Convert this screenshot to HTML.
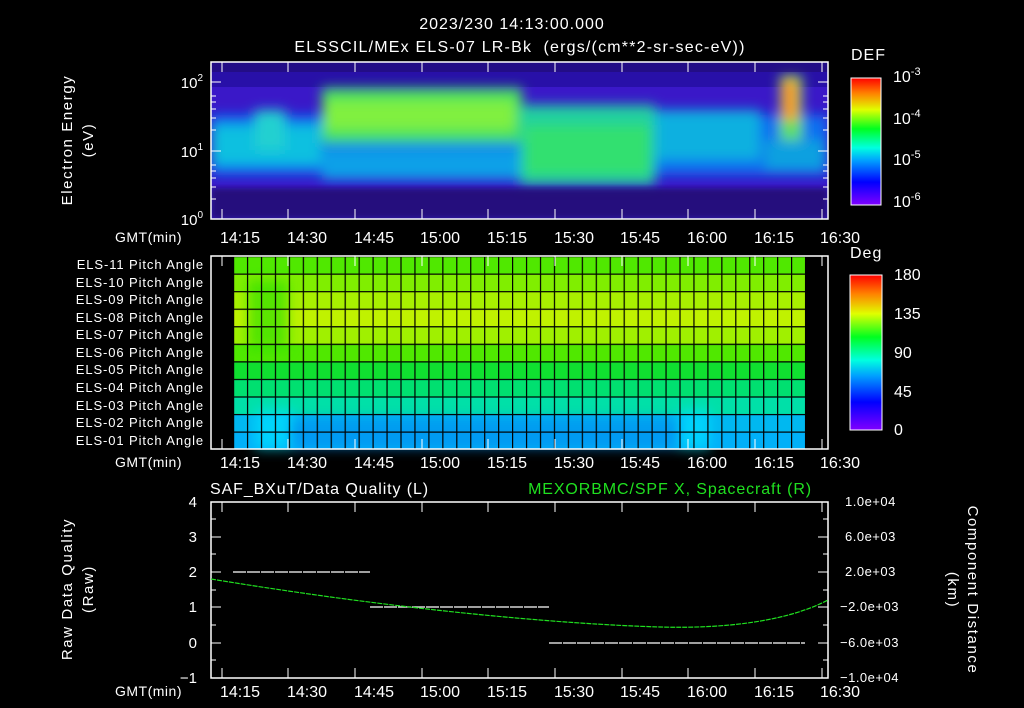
<!DOCTYPE html>
<html><head><meta charset="utf-8"><style>
html,body{margin:0;padding:0;background:#000;width:1024px;height:708px;overflow:hidden}
svg text{font-family:"Liberation Sans",sans-serif;fill:#fff}
</style></head><body>
<svg width="1024" height="708" viewBox="0 0 1024 708" xmlns="http://www.w3.org/2000/svg">
<defs>
<filter id="b6" x="-20%" y="-50%" width="140%" height="200%"><feGaussianBlur stdDeviation="6"/></filter>
<filter id="b3"><feGaussianBlur stdDeviation="3"/></filter>
<linearGradient id="cb" x1="0" y1="1" x2="0" y2="0">
<stop offset="0" stop-color="#8000ff"/><stop offset="0.18" stop-color="#0000ff"/><stop offset="0.35" stop-color="#00a0ff"/><stop offset="0.45" stop-color="#00ffe0"/><stop offset="0.6" stop-color="#00ff20"/><stop offset="0.75" stop-color="#e0ff00"/><stop offset="0.88" stop-color="#ff8000"/><stop offset="1" stop-color="#ff0000"/>
</linearGradient>
<pattern id="grid" x="233" y="256" width="13.95" height="17.55" patternUnits="userSpaceOnUse">
<rect x="0" y="0" width="13.95" height="1.2" fill="#000"/><rect x="0" y="0" width="1.2" height="17.55" fill="#000"/>
</pattern>
<clipPath id="c1"><rect x="211" y="62" width="617" height="157"/></clipPath>
</defs>

<text x="512" y="29" font-size="16" letter-spacing="1" text-anchor="middle">2023/230 14:13:00.000</text>
<text x="520" y="52" font-size="16" letter-spacing="1.2" text-anchor="middle" xml:space="preserve">ELSSCIL/MEx ELS-07 LR-Bk  (ergs/(cm**2-sr-sec-eV))</text>

<!-- Panel 1 spectrogram -->
<g clip-path="url(#c1)">
<rect x="211" y="62" width="617" height="157" fill="#3a18c8"/>
<rect x="211" y="62" width="617" height="25" fill="#2810a8"/>
<g filter="url(#b6)">
<rect x="211" y="115" width="617" height="60" fill="#1070f0"/>
<rect x="211" y="125" width="110" height="40" fill="#10c0e0"/>
<rect x="255" y="110" width="30" height="40" fill="#20d0d0"/>
<rect x="322" y="88" width="200" height="55" fill="#40e060"/>
<rect x="325" y="100" width="190" height="30" fill="#80f040"/>
<rect x="322" y="150" width="200" height="30" fill="#10a0e8"/>
<rect x="520" y="105" width="135" height="80" fill="#20d0a0"/>
<rect x="525" y="125" width="125" height="50" fill="#30e070"/>
<rect x="655" y="110" width="105" height="50" fill="#10b0e0"/>
<rect x="780" y="75" width="22" height="85" fill="#60e060"/>
<rect x="783" y="80" width="14" height="40" fill="#ff9020"/>
<rect x="765" y="140" width="60" height="30" fill="#10a0e0"/>
</g>
<rect x="211" y="188" width="617" height="31" fill="#200c70" opacity="0.85" filter="url(#b3)"/>
<rect x="211" y="62" width="617" height="10" fill="#200c70" opacity="0.6"/>
</g>
<rect x="211" y="62" width="617" height="157" fill="none" stroke="#fff" stroke-width="1.5"/>
<g stroke="#fff" stroke-width="1">
<path d="M211 82h10M211 151h10M211 219h10M828 82h-10M828 151h-10M211 130h5M211 118h5M211 109h5M211 102h5M211 96h5M211 199h5M211 187h5M211 178h5M211 171h5M211 165h5M828 130h-5M828 118h-5M828 109h-5M828 102h-5M828 96h-5M828 199h-5M828 187h-5M828 178h-5M828 171h-5M828 165h-5"/>
</g>
<text x="203" y="88" font-size="15" text-anchor="end">10<tspan font-size="10" dy="-7">2</tspan></text>
<text x="203" y="157" font-size="15" text-anchor="end">10<tspan font-size="10" dy="-7">1</tspan></text>
<text x="203" y="225" font-size="15" text-anchor="end">10<tspan font-size="10" dy="-7">0</tspan></text>
<text transform="translate(72,140) rotate(-90)" font-size="15" letter-spacing="1.6" text-anchor="middle">Electron Energy</text>
<text transform="translate(93,140) rotate(-90)" font-size="15" letter-spacing="1.6" text-anchor="middle">(eV)</text>
<text x="851" y="60" font-size="16" letter-spacing="1">DEF</text>
<rect x="851" y="78" width="30" height="127" fill="url(#cb)" stroke="#fff"/>
<text x="893" y="82" font-size="16">10<tspan font-size="11" dy="-7">-3</tspan></text>
<text x="893" y="124" font-size="16">10<tspan font-size="11" dy="-7">-4</tspan></text>
<text x="893" y="165" font-size="16">10<tspan font-size="11" dy="-7">-5</tspan></text>
<text x="893" y="207" font-size="16">10<tspan font-size="11" dy="-7">-6</tspan></text>

<!-- Panel 2 -->
<g>
<rect x="233" y="256" width="572" height="17.6" fill="#50e800"/>
<rect x="233" y="273.5" width="572" height="17.6" fill="#80ee00"/>
<rect x="233" y="291" width="572" height="17.6" fill="#a8f000"/>
<rect x="233" y="308.6" width="572" height="17.6" fill="#c0f200"/>
<rect x="233" y="326.2" width="572" height="17.6" fill="#a0f000"/>
<rect x="233" y="343.8" width="572" height="17.6" fill="#50e800"/>
<rect x="233" y="361.4" width="572" height="17.6" fill="#10e030"/>
<rect x="233" y="379" width="572" height="17.6" fill="#00e070"/>
<rect x="233" y="396.6" width="572" height="17.6" fill="#00e0a8"/>
<rect x="233" y="414.2" width="572" height="17.6" fill="#00b8f0"/>
<rect x="233" y="431.8" width="572" height="17.2" fill="#00b0f8"/>
<g filter="url(#b6)" opacity="0.7">
<rect x="248" y="280" width="40" height="70" fill="#30e000"/>
<rect x="255" y="410" width="40" height="39" fill="#00e0ff"/>
<rect x="290" y="418" width="390" height="30" fill="#0090f0"/>
<rect x="680" y="410" width="30" height="39" fill="#00e0ff"/>
</g>
<rect x="233" y="256" width="572" height="193" fill="url(#grid)"/>
</g>
<rect x="211" y="256" width="617" height="193" fill="none" stroke="#fff" stroke-width="1.5"/>
<g font-size="13" letter-spacing="0.9" text-anchor="end">
<text x="204" y="269">ELS-11 Pitch Angle</text>
<text x="204" y="287">ELS-10 Pitch Angle</text>
<text x="204" y="304">ELS-09 Pitch Angle</text>
<text x="204" y="322">ELS-08 Pitch Angle</text>
<text x="204" y="339">ELS-07 Pitch Angle</text>
<text x="204" y="357">ELS-06 Pitch Angle</text>
<text x="204" y="374">ELS-05 Pitch Angle</text>
<text x="204" y="392">ELS-04 Pitch Angle</text>
<text x="204" y="410">ELS-03 Pitch Angle</text>
<text x="204" y="427">ELS-02 Pitch Angle</text>
<text x="204" y="445">ELS-01 Pitch Angle</text>
</g>
<text x="850" y="258" font-size="16" letter-spacing="1">Deg</text>
<rect x="850" y="275" width="32" height="155" fill="url(#cb)" stroke="#fff"/>
<g font-size="16"><text x="894" y="280">180</text><text x="894" y="319">135</text><text x="894" y="358">90</text><text x="894" y="397">45</text><text x="894" y="435">0</text></g>

<!-- Panel 3 -->
<rect x="211" y="502" width="617" height="176" fill="none" stroke="#fff" stroke-width="1.5"/>
<g stroke="#fff" stroke-width="1">
<path d="M211 537h10M211 572h10M211 607h10M211 643h10M211 519h5M211 554h5M211 590h5M211 625h5M211 660h5"/>
<path d="M828 537h-10M828 572h-10M828 607h-10M828 643h-10M828 519h-5M828 554h-5M828 590h-5M828 625h-5M828 660h-5"/>
</g>
<g stroke="#fff" stroke-width="1.2" stroke-dasharray="13 1">
<path d="M233 572H370M370 607H549M549 643H805"/>
</g>
<path d="M211 579 C 400 610, 560 624, 660 627 C 730 629, 790 620, 828 600" fill="none" stroke="#20e020" stroke-width="1.2" stroke-dasharray="5 1"/>
<text x="210" y="494" font-size="16" letter-spacing="0.9">SAF_BXuT/Data Quality (L)</text>
<text x="812" y="494" font-size="16" letter-spacing="0.9" text-anchor="end" style="fill:#20e020">MEXORBMC/SPF X, Spacecraft (R)</text>
<g font-size="15" text-anchor="end"><text x="197" y="507">4</text><text x="197" y="542">3</text><text x="197" y="577">2</text><text x="197" y="612">1</text><text x="197" y="648">0</text><text x="197" y="683">−1</text></g>
<g font-size="13" letter-spacing="0.5"><text x="845" y="506">1.0e+04</text><text x="845" y="541">6.0e+03</text><text x="845" y="576">2.0e+03</text><text x="840" y="611">−2.0e+03</text><text x="840" y="647">−6.0e+03</text><text x="840" y="682">−1.0e+04</text></g>
<text transform="translate(72,589) rotate(-90)" font-size="15" letter-spacing="1.6" text-anchor="middle">Raw Data Quality</text>
<text transform="translate(93,589) rotate(-90)" font-size="15" letter-spacing="1.6" text-anchor="middle">(Raw)</text>
<text transform="translate(968,590) rotate(90)" font-size="15" letter-spacing="1.6" text-anchor="middle">Component Distance</text>
<text transform="translate(948,590) rotate(90)" font-size="15" letter-spacing="1.6" text-anchor="middle">(km)</text>

<!-- time ticks & labels -->
<g stroke="#fff" stroke-width="1">
<path d="M222 62v10M288 62v10M355 62v10M422 62v10M488 62v10M555 62v10M622 62v10M688 62v10M755 62v10M822 62v10M222 219v-10M288 219v-10M355 219v-10M422 219v-10M488 219v-10M555 219v-10M622 219v-10M688 219v-10M755 219v-10M822 219v-10"/>
<path d="M222 256v10M288 256v10M355 256v10M422 256v10M488 256v10M555 256v10M622 256v10M688 256v10M755 256v10M822 256v10M222 449v-10M288 449v-10M355 449v-10M422 449v-10M488 449v-10M555 449v-10M622 449v-10M688 449v-10M755 449v-10M822 449v-10"/>
<path d="M222 502v10M288 502v10M355 502v10M422 502v10M488 502v10M555 502v10M622 502v10M688 502v10M755 502v10M822 502v10M222 678v-10M288 678v-10M355 678v-10M422 678v-10M488 678v-10M555 678v-10M622 678v-10M688 678v-10M755 678v-10M822 678v-10"/>
</g>
<g font-size="15" text-anchor="middle">
<g id="tl"><text x="220" y="0">14:15</text><text x="287" y="0">14:30</text><text x="354" y="0">14:45</text><text x="420" y="0">15:00</text><text x="487" y="0">15:15</text><text x="554" y="0">15:30</text><text x="620" y="0">15:45</text><text x="687" y="0">16:00</text><text x="754" y="0">16:15</text><text x="820" y="0">16:30</text></g>
</g>
<use href="#tl" y="243"/><use href="#tl" y="468"/><use href="#tl" y="697"/>
<g font-size="14" letter-spacing="0.5" text-anchor="end"><text x="182" y="242">GMT(min)</text><text x="182" y="467">GMT(min)</text><text x="182" y="696">GMT(min)</text></g>
</svg>
</body></html>
